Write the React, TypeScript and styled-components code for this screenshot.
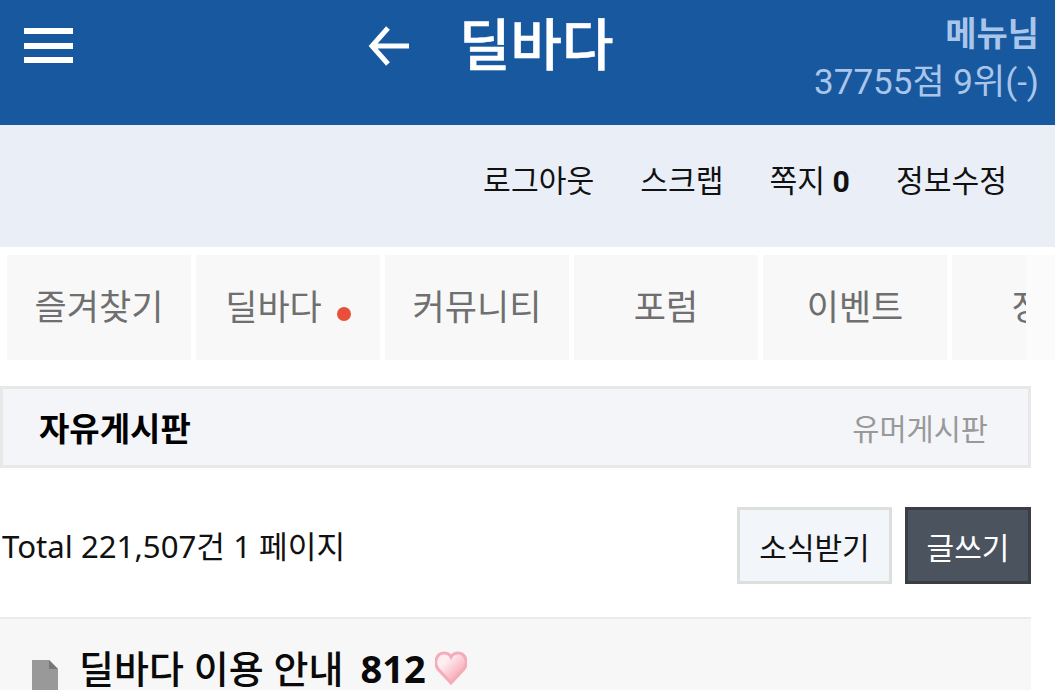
import React from 'react'
import styled, { createGlobalStyle } from 'styled-components'

const GlobalStyle = createGlobalStyle`
  html, body {
    margin: 0;
    padding: 0;
    height: 100%;
    overflow: hidden;
    background: #fff;
    font-family: Roboto, "Noto Sans CJK KR", sans-serif;
  }
  * { box-sizing: border-box; }
`

const TABS = ['즐겨찾기', '딜바다', '커뮤니티', '포럼', '이벤트', '장터']
const LINKS = ['로그아웃', '스크랩']

const App = (): JSX.Element => (
  <Page>
    <GlobalStyle />
    <Header>
      <MenuButton aria-label='menu'>
        <span /><span /><span />
      </MenuButton>
      <TitleGroup>
        <svg width='42' height='40' viewBox='0 0 42 40' fill='none' stroke='#fff' strokeWidth='5'>
          <path d='M41 20H4M20 2 4 20l16 18' />
        </svg>
        <Title>딜바다</Title>
      </TitleGroup>
      <UserBox>
        <UserName>메뉴님</UserName>
        <UserScore>37755점 9위(-)</UserScore>
      </UserBox>
    </Header>

    <SubBar>
      {LINKS.map((link) => <SubLink key={link}>{link}</SubLink>)}
      <SubLink>쪽지 <b>0</b></SubLink>
      <SubLink>정보수정</SubLink>
    </SubBar>

    <TabStrip>
      {TABS.map((tab) => (
        <Tab key={tab}>
          {tab}
          {tab === '딜바다' && <Dot />}
        </Tab>
      ))}
      <TabFade />
    </TabStrip>

    <BoardBar>
      <BoardTitle>자유게시판</BoardTitle>
      <BoardLink>유머게시판</BoardLink>
    </BoardBar>

    <TotalRow>
      <TotalText>Total 221,507건 1 페이지</TotalText>
      <Actions>
        <ActionButton>소식받기</ActionButton>
        <ActionButton dark>글쓰기</ActionButton>
      </Actions>
    </TotalRow>

    <Notice>
      <svg width='26' height='40' viewBox='0 0 26 40'>
        <path d='M0 1h17l9 9v30H0z' fill='#999' />
        <path d='M17 1l9 9h-9z' fill='#777' />
      </svg>
      <NoticeTitle>딜바다 이용 안내<Count>812</Count></NoticeTitle>
      <svg width='32' height='34' viewBox='0 0 32 34'>
        <defs>
          <linearGradient id='heartFill' x1='0' y1='0' x2='1' y2='1'>
            <stop offset='0.3' stopColor='#ffeef1' />
            <stop offset='0.7' stopColor='#f8b4c0' />
          </linearGradient>
        </defs>
        <path d='M16 32 3 18C-2 11 2 2 9 2c3 0 6 2 7 4 1-2 4-4 7-4 7 0 11 9 6 16z' fill='url(#heartFill)' stroke='#f5acba' strokeWidth='3' />
      </svg>
    </Notice>
  </Page>
)

export default App

const Page = styled.div`
  width: 1055px;
  height: 690px;
  overflow: hidden;
`

const Header = styled.header`
  display: flex;
  align-items: flex-start;
  height: 125px;
  padding: 0 16px 0 24px;
  background: #18589f;
`

const MenuButton = styled.div`
  display: flex;
  flex-direction: column;
  justify-content: space-between;
  width: 49px;
  height: 35px;
  margin-top: 28px;

  span {
    display: block;
    height: 6px;
    background: #fff;
  }
`

const TitleGroup = styled.div`
  display: flex;
  align-items: center;
  gap: 49px;
  margin: 10px 0 0 295px;
`

const Title = styled.div`
  color: #fff;
  font-size: 56px;
  font-weight: 500;
  line-height: 72px;
  -webkit-text-stroke: 0.5px #fff;
`

const UserBox = styled.div`
  margin: 10px 0 0 auto;
  text-align: right;
  color: #a9c6ea;
  white-space: nowrap;
`

const UserName = styled.div`
  font-size: 34px;
  font-weight: 700;
  line-height: 48px;
`

const UserScore = styled.div`
  font-size: 35px;
  line-height: 50px;
`

const SubBar = styled.nav`
  display: flex;
  justify-content: flex-end;
  align-items: center;
  gap: 46px;
  height: 122px;
  padding: 0 48px 14px 0;
  background: #eaeff7;
`

const SubLink = styled.span`
  color: #111;
  font-size: 30.2px;
  white-space: nowrap;

  b { font-weight: 700; }
`

const TabStrip = styled.div`
  position: relative;
  display: flex;
  gap: 5px;
  height: 105px;
  margin-top: 8px;
  padding-left: 7px;
  overflow: hidden;
`

const Tab = styled.div`
  position: relative;
  flex: 0 0 184px;
  display: flex;
  align-items: center;
  justify-content: center;
  padding-bottom: 6px;
  background: #f8f8f8;
  color: #6f6f6f;
  font-size: 35px;
`

const Dot = styled.i`
  width: 14px;
  height: 14px;
  margin: 18px 0 0 15px;
  border-radius: 50%;
  background: #e8503a;
`

const TabFade = styled.div`
  position: absolute;
  top: 0;
  right: 0;
  bottom: 0;
  width: 29px;
  background: #fbfbfb;
`

const BoardBar = styled.div`
  display: flex;
  align-items: center;
  justify-content: space-between;
  width: 1031px;
  height: 82px;
  margin-top: 26px;
  padding: 0 40px 0 36px;
  border: 3px solid #e8e8e8;
  background: #f4f5f9;
`

const BoardTitle = styled.div`
  color: #000;
  font-size: 33px;
  font-weight: 700;
`

const BoardLink = styled.div`
  color: #999;
  font-size: 29.5px;
`

const TotalRow = styled.div`
  display: flex;
  align-items: center;
  justify-content: space-between;
  width: 1031px;
  height: 77px;
  margin-top: 39px;
  padding-left: 2px;
`

const TotalText = styled.div`
  color: #111;
  font-family: "Noto Sans", "Noto Sans CJK KR", sans-serif;
  font-size: 31.2px;
  line-height: 40px;
  white-space: nowrap;
`

const Actions = styled.div`
  display: flex;
  gap: 13px;
`

const ActionButton = styled.div<{ dark?: boolean }>`
  display: flex;
  align-items: center;
  justify-content: center;
  width: ${({ dark }) => (dark ? '126px' : '155px')};
  height: 77px;
  border: 3px solid ${({ dark }) => (dark ? '#3b3d43' : '#dcdfdc')};
  background: ${({ dark }) => (dark ? '#4b535f' : '#f2f5fa')};
  color: ${({ dark }) => (dark ? '#fff' : '#111')};
  font-size: 30px;
`

const Notice = styled.div`
  display: flex;
  align-items: flex-start;
  width: 1031px;
  height: 73px;
  margin-top: 33px;
  padding: 40px 0 0 32px;
  border-top: 2px solid #ebebeb;
  background: #f7f7f7;

  svg:last-child {
    flex: none;
    margin: -8px 0 0 9px;
  }
`

const NoticeTitle = styled.div`
  margin: -13px 0 0 21px;
  color: #0a0a0a;
  font-family: "Noto Sans", "Noto Sans CJK KR", sans-serif;
  font-size: 38px;
  font-weight: 500;
  line-height: 44px;
  white-space: nowrap;
`

const Count = styled.b`
  margin-left: 17px;
  font-weight: 700;
`
